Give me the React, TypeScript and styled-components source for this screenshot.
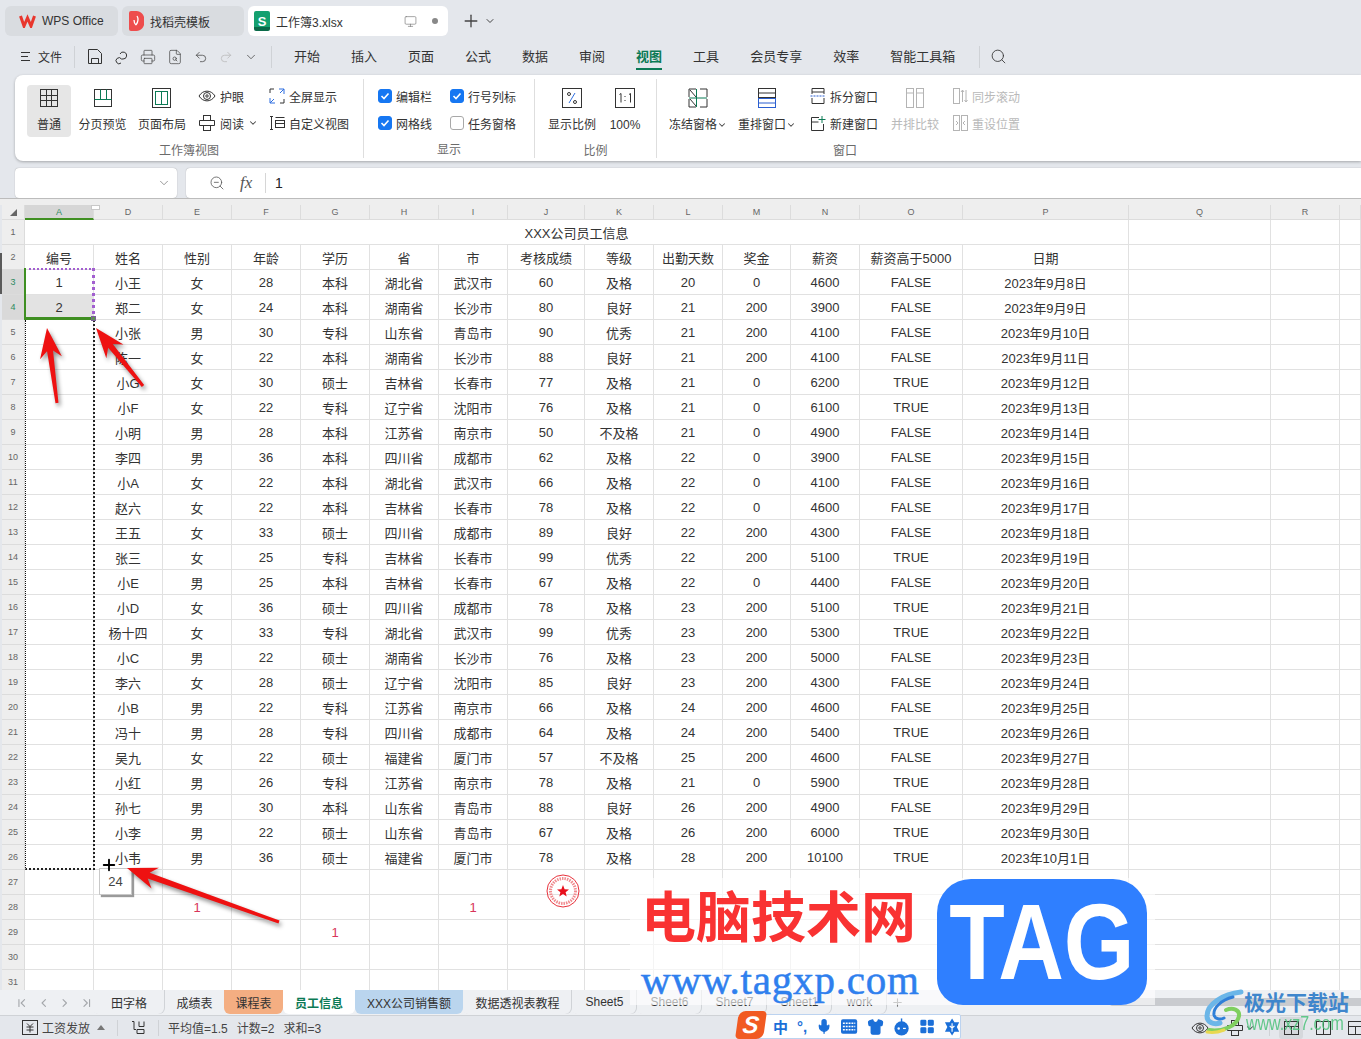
import React from 'react'
import styled, { createGlobalStyle } from 'styled-components'
import {
  ChevronDown,
  ChevronFirst,
  ChevronLast,
  ChevronLeft,
  ChevronRight,
  FileSearch,
  LayoutGrid,
  Mic,
  Monitor,
  Plus,
  Printer,
  Redo2,
  Search,
  Shirt,
  Undo2,
  ZoomOut,
} from 'lucide-react'

const FONT = '"Liberation Sans", "Noto Sans CJK SC", sans-serif'
const GREEN = '#0b7a55'
const LINE = '#e1e1e1'
const IME_BLUE = '#1b6fd8'

const GlobalStyle = createGlobalStyle`
  html, body {
    margin: 0;
    padding: 0;
    background: #e4e7ec;
    font-family: ${FONT};
  }
  * {
    box-sizing: border-box;
  }
`

const Page = styled.div`
  position: relative;
  width: 1361px;
  height: 1039px;
  overflow: hidden;
  display: flex;
  flex-direction: column;
  background: #e4e7ec;
  color: #333;
`

/* window tabs */
const WindowBar = styled.div`
  height: 38px;
  flex: none;
  display: flex;
  align-items: flex-start;
  padding: 6px 0 0 5px;
  gap: 4px;
`

const WindowTab = styled.div<{ $w: number; $active?: boolean; $pad: number }>`
  width: ${({ $w }) => $w}px;
  height: 30px;
  flex: none;
  display: flex;
  align-items: center;
  gap: 6px;
  padding: 0 10px 0 ${({ $pad }) => $pad}px;
  border-radius: 6px;
  font-size: 12px;
  color: #333;
  white-space: nowrap;
  background: ${({ $active }) => ($active ? '#fff' : '#d9dce0')};
`

const TabFile = styled.span`
  flex: 1;
`

const SheetBadge = styled.span`
  width: 16px;
  height: 20px;
  border-radius: 2px;
  background: linear-gradient(#14a06f 80%, #0a6a49 80%);
  color: #fff;
  font-size: 13px;
  font-weight: 700;
  display: flex;
  align-items: center;
  justify-content: center;
`

const UnsavedDot = styled.span`
  width: 6px;
  height: 6px;
  margin-left: 9px;
  border-radius: 50%;
  background: #888;
`

const NewTab = styled.div`
  display: flex;
  align-items: center;
  gap: 3px;
  height: 30px;
  margin-left: 9px;
  color: #444;
`

/* menu row */
const MenuBar = styled.div`
  height: 37px;
  flex: none;
  display: flex;
  align-items: center;
  padding-left: 21px;
  font-size: 13px;
`

const MenuFile = styled.div`
  display: flex;
  align-items: center;
  gap: 8px;
  width: 53px;
  font-size: 12px;
`

const MenuDivider = styled.span<{ $left: number; $right: number }>`
  width: 1px;
  height: 22px;
  background: #cfd2d6;
  margin: 0 ${({ $right }) => $right}px 0 ${({ $left }) => $left}px;
`

const QuickIcons = styled.div`
  display: flex;
  align-items: center;
  gap: 11px;
  width: 184px;
  color: #444;
`

const MenuItems = styled.div`
  display: flex;
  align-items: center;
  gap: 31px;
`

const MenuItem = styled.div<{ $active?: boolean }>`
  line-height: 18px;
  color: ${({ $active }) => ($active ? GREEN : '#333')};
  font-weight: ${({ $active }) => ($active ? 700 : 400)};
  border-bottom: 2px solid ${({ $active }) => ($active ? GREEN : 'transparent')};
  padding-bottom: 2px;
  margin-top: 4px;
`

/* ribbon */
const Ribbon = styled.div`
  height: 86px;
  flex: none;
  display: flex;
  margin-left: 15px;
  background: #fff;
  border-radius: 8px 0 0 8px;
  box-shadow: 0 1px 3px rgba(0, 0, 0, 0.28);
`

const Group = styled.div<{ $w: number; $last?: boolean }>`
  width: ${({ $w }) => $w}px;
  height: 79px;
  margin-top: 4px;
  padding-top: 6px;
  display: flex;
  flex-direction: column;
  border-right: ${({ $last }) => ($last ? 'none' : '1px solid #dedede')};
`

const GroupBody = styled.div<{ $cols: string; $pad: number }>`
  height: 52px;
  display: grid;
  grid-template-columns: ${({ $cols }) => $cols};
  padding-left: ${({ $pad }) => $pad}px;
`

const GroupLabel = styled.div`
  margin-top: 6px;
  line-height: 16px;
  text-align: center;
  font-size: 12px;
  color: #6b6b6b;
`

const LargeButton = styled.div<{ $w: number; $on?: boolean; $off?: boolean }>`
  width: ${({ $w }) => $w}px;
  height: 52px;
  display: flex;
  flex-direction: column;
  align-items: center;
  padding-top: 3px;
  border-radius: 4px;
  background: ${({ $on }) => ($on ? '#e6e6e6' : 'transparent')};
  color: ${({ $off }) => ($off ? '#b9b9b9' : '#333')};
  font-size: 12px;
  white-space: nowrap;
`

const LargeLabel = styled.span`
  margin-top: 9px;
  line-height: 16px;
  display: flex;
  align-items: center;
`

const SmallStack = styled.div`
  display: flex;
  flex-direction: column;
  gap: 3px;
  margin-top: -1px;
`

const SmallItem = styled.div<{ $off?: boolean }>`
  height: 24px;
  display: flex;
  align-items: center;
  gap: 4px;
  font-size: 12px;
  white-space: nowrap;
  color: ${({ $off }) => ($off ? '#b9b9b9' : '#333')};
`

const Check = styled.span<{ $on?: boolean }>`
  width: 14px;
  height: 14px;
  border-radius: 3px;
  display: flex;
  align-items: center;
  justify-content: center;
  background: ${({ $on }) => ($on ? '#1677f2' : '#fff')};
  border: 1px solid ${({ $on }) => ($on ? '#1677f2' : '#a8a8a8')};
`

/* formula row */
const FormulaRow = styled.div`
  height: 30px;
  flex: none;
  margin-top: 7px;
  display: flex;
  gap: 9px;
  padding-left: 15px;
`

const NameBox = styled.div`
  width: 162px;
  display: flex;
  align-items: center;
  justify-content: flex-end;
  padding-right: 6px;
  background: #fff;
  border-radius: 4px;
  box-shadow: 0 0 1px rgba(0, 0, 0, 0.4);
  color: #777;
`

const FormulaBox = styled.div`
  flex: 1;
  display: flex;
  align-items: center;
  padding-left: 23px;
  background: #fff;
  border-radius: 4px 0 0 4px;
  box-shadow: 0 0 1px rgba(0, 0, 0, 0.4);
  color: #555;
`

const FxMark = styled.span`
  margin-left: 15px;
  width: 25px;
  font-family: 'Liberation Serif', serif;
  font-style: italic;
  font-size: 17px;
`

const FormulaValue = styled.span`
  padding-left: 9px;
  border-left: 1px solid #d6d6d6;
  font-size: 14px;
  line-height: 20px;
  color: #222;
`

/* sheet */
const SheetTopBar = styled.div`
  height: 7px;
  flex: none;
  background: #eeeeee;
  border-top: 1px solid #bcbcbc;
`

const SheetArea = styled.div`
  flex: 1;
  min-height: 0;
  overflow: hidden;
  background: #e4e7ec;
`

const SheetGrid = styled.div`
  display: grid;
  grid-template-columns: 25px repeat(7, 69px) 77px 69px 69px 68px 69px 103px 166px 142px 69px 21px;
  grid-template-rows: 15px;
  grid-auto-rows: 25px;
  font-size: 13px;
  color: #333;
`

const ColHead = styled.div<{ $on?: boolean }>`
  display: flex;
  align-items: center;
  justify-content: center;
  font-size: 9px;
  color: ${({ $on }) => ($on ? '#2d8a5f' : '#666')};
  background: ${({ $on }) => ($on ? '#d6d6d6' : '#eeeeee')};
  border-right: 1px solid #dcdcdc;
  border-bottom: ${({ $on }) => ($on ? '2px solid #3f8f22' : '1px solid #dcdcdc')};
`

const RowHead = styled.div<{ $on?: boolean }>`
  display: flex;
  align-items: center;
  justify-content: center;
  margin-left: 2px;
  font-size: 9px;
  color: ${({ $on }) => ($on ? '#2d8a5f' : '#666')};
  background: ${({ $on }) => ($on ? '#d9d9d9' : '#eeeeee')};
  border-right: 1px solid #dcdcdc;
  border-bottom: 1px solid #dcdcdc;
`

const Cell = styled.div<{ $grey?: boolean; $accent?: boolean }>`
  display: flex;
  align-items: center;
  justify-content: center;
  padding-top: 1px;
  white-space: nowrap;
  background: ${({ $grey }) => ($grey ? '#e3e3e3' : '#fff')};
  border-right: 1px solid ${LINE};
  border-bottom: 1px solid ${LINE};
  color: ${({ $accent }) => ($accent ? '#d8345a' : '#333')};
`

const TitleCell = styled(Cell)`
  grid-column: span 14;
`

/* sheet tabs and status bar */
const SheetTabs = styled.div`
  height: 26px;
  flex: none;
  display: flex;
  background: #eef0f3;
  border-bottom: 1px solid #cfd2d6;
  font-size: 12px;
`

const TabNav = styled.div`
  width: 93px;
  display: flex;
  align-items: center;
  gap: 8px;
  padding-left: 15px;
  color: #a4a7ab;
`

const SheetTab = styled.div<{ $w: number; $bg?: string; $active?: boolean; $line?: boolean }>`
  width: ${({ $w }) => $w}px;
  height: 24px;
  display: flex;
  align-items: center;
  justify-content: center;
  white-space: nowrap;
  border-radius: 0 0 6px 6px;
  background: ${({ $bg }) => $bg || 'transparent'};
  color: ${({ $active }) => ($active ? GREEN : '#333')};
  font-weight: ${({ $active }) => ($active ? 700 : 400)};
  box-shadow: ${({ $line }) => ($line ? 'inset -1px 0 0 #d0d3d7' : 'none')};
`

const TabScroll = styled.div`
  width: 251px;
  height: 8px;
  margin: 8px 0 0 auto;
  background: #c9cbcf;
  border-radius: 2px 0 0 2px;
`

const StatusBar = styled.div`
  height: 23px;
  flex: none;
  display: flex;
  align-items: center;
  padding-left: 22px;
  font-size: 12px;
  color: #444;
`

const StatusGroup = styled.div`
  display: flex;
  align-items: center;
  gap: 4px;
`

const StatusCaret = styled.svg`
  margin-left: 3px;
`

const StatusDivider = styled.span<{ $left: number; $right: number }>`
  width: 1px;
  height: 16px;
  background: #cfd2d6;
  margin: 0 ${({ $right }) => $right}px 0 ${({ $left }) => $left}px;
`

const StatusStats = styled.div`
  display: flex;
  gap: 9px;
`

const ViewButtons = styled.div`
  display: flex;
  align-items: center;
  gap: 8px;
  margin: 0 -6px 0 auto;
`

const ViewTools = styled.div`
  display: flex;
  align-items: center;
  gap: 17px;
`

const ReadMenu = styled.div`
  display: flex;
  align-items: center;
  gap: 1px;
`

const ViewButton = styled.span<{ $on?: boolean }>`
  width: 24px;
  height: 22px;
  display: flex;
  align-items: center;
  justify-content: center;
  border-radius: 3px;
  background: ${({ $on }) => ($on ? '#d5d8dc' : 'transparent')};
`

/* things lying over the sheet */
const WindowEdge = styled.div`
  position: absolute;
  left: 0;
  top: 253px;
  width: 2px;
  height: 41px;
  background: #5a5a5a;
`

const ColResizeMark = styled.div`
  position: absolute;
  left: 91px;
  top: 205px;
  width: 9px;
  height: 5px;
  background: #fff;
  border: 1px solid #c8c8c8;
`

const CopySource = styled.div`
  position: absolute;
  left: 24px;
  top: 268px;
  width: 71px;
  height: 52px;
  border: 2px dotted #a25fd0;
  border-right-width: 3px;
`

const SelectEdge = styled.div`
  position: absolute;
  left: 24px;
  top: 268px;
  width: 70px;
  height: 52px;
  border-left: 2px solid #3f8f22;
  border-bottom: 3px solid #3f8f22;
`

const FillHandle = styled.div`
  position: absolute;
  left: 91px;
  top: 316px;
  width: 5px;
  height: 5px;
  background: #5f8f52;
  border: 1px solid #7b5f9a;
`

const FillRange = styled.div`
  position: absolute;
  left: 25px;
  top: 320px;
  width: 70px;
  height: 550px;
  border-left: 1px dotted #111;
  border-right: 2px dotted #222;
  border-bottom: 2px dotted #222;
`

const FillTip = styled.div`
  position: absolute;
  left: 99px;
  top: 868px;
  width: 33px;
  height: 27px;
  display: flex;
  align-items: center;
  justify-content: center;
  background: #fff;
  border: 1px solid #c8c8c8;
  box-shadow: 2px 2px 1px #9a9a9a;
  font-size: 13px;
  color: #444;
`

const FillCursor = styled(Plus)`
  position: absolute;
  left: 100px;
  top: 856px;
  color: #000;
`

const DrawLayer = styled.svg`
  position: absolute;
  left: 0;
  top: 0;
  pointer-events: none;
`

const ArrowShape = styled.polygon`
  fill: #ee1111;
  filter: drop-shadow(2px 3px 2px rgba(0, 0, 0, 0.45));
`

const Stamp = styled.svg`
  position: absolute;
  left: 545px;
  top: 873px;
`

const WatermarkWash = styled.div`
  position: absolute;
  left: 630px;
  top: 878px;
  width: 525px;
  height: 127px;
  background: rgba(255, 255, 255, 0.62);
`

const WatermarkTitle = styled.div`
  position: absolute;
  left: 641px;
  top: 874px;
  font-family: 'Noto Sans CJK SC', sans-serif;
  font-weight: 700;
  font-size: 55px;
  line-height: 78px;
  color: #f93232;
  white-space: nowrap;
`

const WatermarkUrl = styled.div`
  position: absolute;
  left: 641px;
  top: 956px;
  font-family: 'Liberation Serif', serif;
  font-size: 41px;
  line-height: 48px;
  letter-spacing: 0.8px;
  color: #2f7fee;
  -webkit-text-stroke: 0.5px #2f7fee;
  white-space: nowrap;
`

const TagBadge = styled.div`
  position: absolute;
  left: 937px;
  top: 879px;
  width: 210px;
  height: 126px;
  display: flex;
  align-items: center;
  justify-content: center;
  border-radius: 34px 34px 26px 26px;
  background: #2f7fff;
`

const TagText = styled.span`
  font-family: 'Liberation Sans', sans-serif;
  font-weight: 700;
  font-size: 107px;
  line-height: 107px;
  color: #fff;
  transform: scaleX(0.85);
`

const SiteName = styled.div`
  position: absolute;
  left: 1244px;
  top: 986px;
  font-family: 'Noto Sans CJK SC', sans-serif;
  font-weight: 700;
  font-size: 21px;
  line-height: 30px;
  color: #3f86cc;
  white-space: nowrap;
`

const SiteUrl = styled.div`
  position: absolute;
  left: 1246px;
  top: 1011px;
  font-family: 'Liberation Sans', sans-serif;
  font-size: 20px;
  line-height: 24px;
  color: #4cc27a;
  opacity: 0.85;
  white-space: nowrap;
  transform: scaleX(0.8);
  transform-origin: left center;
`

const SiteSwirl = styled.svg`
  position: absolute;
  left: 1203px;
  top: 988px;
`

const ImeBar = styled.div`
  position: absolute;
  left: 754px;
  top: 1014px;
  width: 207px;
  height: 25px;
  display: flex;
  align-items: center;
  gap: 9px;
  padding-left: 18px;
  background: #fff;
  border: 1px solid #bcd3f0;
  border-radius: 2px;
  color: ${IME_BLUE};
  font-size: 15px;
  font-weight: 700;
`

const ImeLogo = styled.div`
  position: absolute;
  left: 737px;
  top: 1011px;
  width: 28px;
  height: 28px;
  display: flex;
  align-items: center;
  justify-content: center;
  background: #f15a22;
  border-radius: 7px 4px 7px 4px;
  transform: skewX(-8deg);
  color: #fff;
  font-size: 24px;
  font-weight: 700;
  font-style: italic;
`

const Stroke = ({ w = 18, h = 18, children }: { w?: number; h?: number; children: React.ReactNode }) => (
  <svg width={w} height={h} viewBox={`0 0 ${w} ${h}`} fill="none" stroke="#333" strokeWidth="1">
    {children}
  </svg>
)

const IconNormal = () => (
  <Stroke w={20} h={20}>
    <rect x="1.5" y="1.5" width="17" height="17" />
    <path d="M7.5 1.5v17M12.5 1.5v17M1.5 7.5h17M1.5 12.5h17" />
  </Stroke>
)

const IconPagePreview = () => (
  <Stroke w={20} h={20}>
    <rect x="1.5" y="1.5" width="17" height="17" />
    <path d="M1.5 11.5h17M7.5 1.5v10M13.5 1.5v10" stroke={GREEN} />
  </Stroke>
)

const IconPageLayout = () => (
  <Stroke w={20} h={20}>
    <rect x="0.5" y="0.5" width="18" height="19" />
    <rect x="3.5" y="3.5" width="12" height="13" stroke={GREEN} />
    <path d="M9.5 3.5v13" stroke={GREEN} />
  </Stroke>
)

const IconEye = () => (
  <Stroke w={18} h={14}>
    <path d="M1 7c4-6.5 12-6.5 16 0-4 6.5-12 6.5-16 0z" />
    <circle cx="9" cy="7" r="3.5" />
    <circle cx="9" cy="7" r="1.2" />
  </Stroke>
)

const IconFullscreen = () => (
  <Stroke w={16} h={16}>
    <path d="M1 5V1h4M11 15h4v-4" />
    <path d="M10 1h5v5M15 1l-4 4M1 10v5h5M1 15l4-4" stroke="#2f6fe0" />
  </Stroke>
)

const IconRead = () => (
  <Stroke w={18} h={18}>
    <rect x="5.5" y="1.5" width="7" height="5" />
    <rect x="5.5" y="11.5" width="7" height="5" />
    <path d="M5.5 6.5h-4v5h4M12.5 6.5h4v5h-4" />
  </Stroke>
)

const IconCustomView = () => (
  <Stroke w={16} h={16}>
    <path d="M1 1.5h3M1 14.5h3M2.5 1.5v13" />
    <rect x="6.5" y="5.5" width="9" height="7" />
    <path d="M6.5 2.5h9M6.5 8.5h9" />
  </Stroke>
)

const IconPercent = () => (
  <Stroke w={20} h={20}>
    <rect x="0.5" y="0.5" width="19" height="19" />
    <path d="M13 5l-6 10" stroke="#2f6fe0" />
    <circle cx="7" cy="6" r="1.5" />
    <circle cx="13" cy="14" r="1.5" />
  </Stroke>
)

const IconActual = () => (
  <Stroke w={20} h={20}>
    <rect x="0.5" y="0.5" width="19" height="19" />
    <path d="M4.5 6.5l1.5-1v9M14 6.5l1.5-1v9" />
    <path d="M10 8v1M10 12v1" />
  </Stroke>
)

const IconFreeze = () => (
  <Stroke w={20} h={20}>
    <path d="M1 9V1h7M12 1h7v8M19 11v8h-7M8 19H1v-8" />
    <path d="M1 10h18M8.5 1v18" stroke={GREEN} />
    <path d="M2 2l6 7M2 11l6 7" />
  </Stroke>
)

const IconArrange = () => (
  <Stroke w={20} h={20}>
    <rect x="1.5" y="0.5" width="17" height="9" />
    <path d="M1.5 5h17" />
    <rect x="1.5" y="10.5" width="17" height="9" stroke="#2b5fd0" />
    <path d="M1.5 15h17" stroke="#2b5fd0" />
  </Stroke>
)

const IconSplit = () => (
  <Stroke w={16} h={18}>
    <path d="M2 7V1.5h12V7M2 11v5.5h12V11M2 5h12" />
    <path d="M0.5 9h15" stroke="#2b5fd0" strokeDasharray="2 1" />
  </Stroke>
)

const IconNewWindow = () => (
  <Stroke w={16} h={17}>
    <path d="M9 2.5H1.5v13h12V9M1.5 7h7" />
    <path d="M12 1v7M8.5 4.5h7" stroke={GREEN} />
  </Stroke>
)

const IconSideBySide = () => (
  <svg width="20" height="20" viewBox="0 0 20 20" fill="none" stroke="#b4b4b4">
    <rect x="1.5" y="0.5" width="7" height="19" />
    <rect x="11.5" y="0.5" width="7" height="19" />
    <path d="M1.5 5h7M11.5 5h7" />
  </svg>
)

const IconSyncScroll = () => (
  <svg width="15" height="18" viewBox="0 0 15 18" fill="none" stroke="#b4b4b4">
    <rect x="0.5" y="1.5" width="6" height="15" />
    <path d="M9.5 3v12M13 3v12M8 5l1.5-2L11 5M11.5 13l1.5 2 1.5-2" />
  </svg>
)

const IconResetPos = () => (
  <svg width="15" height="16" viewBox="0 0 15 16" fill="none" stroke="#b4b4b4">
    <rect x="0.5" y="0.5" width="6" height="15" />
    <rect x="8.5" y="0.5" width="6" height="15" />
    <path d="M3 6l2 2-2 2M12 6l-2 2 2 2" />
  </svg>
)

const IconSave = () => (
  <Stroke w={16} h={17}>
    <path d="M1.5 1.5h9l4 4v10h-13z" />
    <path d="M4.5 15.5v-5h7v5" />
  </Stroke>
)

const IconLink = () => (
  <Stroke w={15} h={16}>
    <path d="M6 5a3.5 3.5 0 1 1 3 5H7.5a3 3 0 1 0-.5 4" />
  </Stroke>
)

const IconPayroll = () => (
  <Stroke w={16} h={15}>
    <rect x="0.5" y="0.5" width="15" height="14" />
    <path d="M5 3.5l3 3 3-3M4.5 7h7M4.5 10h7M8 6.5v6" />
  </Stroke>
)

const IconPin = () => (
  <Stroke w={15} h={15}>
    <path d="M1 1.5h2v8h2M8 1.5v5h5v-5M6 13.5h7v-4H6z" />
  </Stroke>
)

const IconPageSplit = ({ cols }: { cols?: boolean }) => (
  <Stroke w={15} h={14}>
    <rect x="0.5" y="0.5" width="14" height="13" />
    {cols ? <path d="M7.5 0.5v13" /> : <path d="M0.5 5.5h14M7.5 5.5v8" />}
  </Stroke>
)

const ImeKeyboard = () => (
  <svg width="17" height="15" viewBox="0 0 17 15">
    <rect width="17" height="15" rx="2" fill={IME_BLUE} />
    <path d="M2 4h13M2 7.5h13M2 11h13" stroke="#fff" strokeWidth="1.5" strokeDasharray="2 1" />
  </svg>
)

const ImeRobot = () => (
  <svg width="18" height="18" viewBox="0 0 18 18">
    <path d="M9 0v4" stroke={IME_BLUE} strokeWidth="1.5" />
    <circle cx="9" cy="10.5" r="7.5" fill={IME_BLUE} />
    <circle cx="6" cy="10.5" r="1.3" fill="#fff" />
    <path d="M10.5 10.5h3" stroke="#fff" strokeWidth="1.3" />
  </svg>
)

const ImeHex = () => (
  <svg width="17" height="18" viewBox="0 0 17 18">
    <path d="M8.5 0l2.5 4h5l-2.5 5 2.5 5h-5l-2.5 4-2.500-4H1l2.500-5L1 4h5z" fill={IME_BLUE} />
    <path d="M8.5 5v9M6 8l2.500 2L11 8" stroke="#fff" strokeWidth="1.2" fill="none" />
  </svg>
)

const CheckBox = ({ on }: { on?: boolean }) => (
  <Check $on={on}>
    {on && (
      <svg width="10" height="10" viewBox="0 0 10 10" fill="none" stroke="#fff" strokeWidth="1.6">
        <path d="M1.5 5l2.5 2.5 4.5-5" />
      </svg>
    )}
  </Check>
)

const Caret = () => <ChevronDown size={10} strokeWidth={2.5} color="#444" />

const COLUMN_LETTERS = ['A', 'D', 'E', 'F', 'G', 'H', 'I', 'J', 'K', 'L', 'M', 'N', 'O', 'P', 'Q', 'R', '']
const HEADERS = ['编号', '姓名', '性别', '年龄', '学历', '省', '市', '考核成绩', '等级', '出勤天数', '奖金', '薪资', '薪资高于5000', '日期']

const STAFF = [
  '小王 女 28 本科 湖北省 武汉市 60 及格 20 0 4600 FALSE 2023年9月8日',
  '郑二 女 24 本科 湖南省 长沙市 80 良好 21 200 3900 FALSE 2023年9月9日',
  '小张 男 30 专科 山东省 青岛市 90 优秀 21 200 4100 FALSE 2023年9月10日',
  '陈一 女 22 本科 湖南省 长沙市 88 良好 21 200 4100 FALSE 2023年9月11日',
  '小G 女 30 硕士 吉林省 长春市 77 及格 21 0 6200 TRUE 2023年9月12日',
  '小F 女 22 专科 辽宁省 沈阳市 76 及格 21 0 6100 TRUE 2023年9月13日',
  '小明 男 28 本科 江苏省 南京市 50 不及格 21 0 4900 FALSE 2023年9月14日',
  '李四 男 36 本科 四川省 成都市 62 及格 22 0 3900 FALSE 2023年9月15日',
  '小A 女 22 本科 湖北省 武汉市 66 及格 22 0 4100 FALSE 2023年9月16日',
  '赵六 女 22 本科 吉林省 长春市 78 及格 22 0 4600 FALSE 2023年9月17日',
  '王五 女 33 硕士 四川省 成都市 89 良好 22 200 4300 FALSE 2023年9月18日',
  '张三 女 25 专科 吉林省 长春市 99 优秀 22 200 5100 TRUE 2023年9月19日',
  '小E 男 25 本科 吉林省 长春市 67 及格 22 0 4400 FALSE 2023年9月20日',
  '小D 女 36 硕士 四川省 成都市 78 及格 23 200 5100 TRUE 2023年9月21日',
  '杨十四 女 33 专科 湖北省 武汉市 99 优秀 23 200 5300 TRUE 2023年9月22日',
  '小C 男 22 硕士 湖南省 长沙市 76 及格 23 200 5000 FALSE 2023年9月23日',
  '李六 女 28 硕士 辽宁省 沈阳市 85 良好 23 200 4300 FALSE 2023年9月24日',
  '小B 男 22 专科 江苏省 南京市 66 及格 24 200 4600 FALSE 2023年9月25日',
  '冯十 男 28 专科 四川省 成都市 64 及格 24 200 5400 TRUE 2023年9月26日',
  '吴九 女 22 硕士 福建省 厦门市 57 不及格 25 200 4600 FALSE 2023年9月27日',
  '小红 男 26 专科 江苏省 南京市 78 及格 21 0 5900 TRUE 2023年9月28日',
  '孙七 男 30 本科 山东省 青岛市 88 良好 26 200 4900 FALSE 2023年9月29日',
  '小李 男 22 硕士 山东省 青岛市 67 及格 26 200 6000 TRUE 2023年9月30日',
  '小韦 男 36 硕士 福建省 厦门市 78 及格 28 200 10100 TRUE 2023年10月1日',
]

// row number -> column index -> stray value below the table
const STRAY: Record<number, Record<number, string>> = {
  28: { 2: '1', 6: '1' },
  29: { 4: '1' },
}

const MENU = ['开始', '插入', '页面', '公式', '数据', '审阅', '视图', '工具', '会员专享', '效率', '智能工具箱']

const padRow = (values: string[]) => [...values, ...Array(COLUMN_LETTERS.length - values.length).fill('')]

const rowValues = (rowNumber: number): string[] => {
  if (rowNumber === 2) return padRow(HEADERS)
  if (rowNumber >= 3 && rowNumber <= 26) {
    const id = rowNumber === 3 ? '1' : rowNumber === 4 ? '2' : ''
    return padRow([id, ...STAFF[rowNumber - 3].split(' ')])
  }
  const stray = STRAY[rowNumber] || {}
  return COLUMN_LETTERS.map((_, i) => stray[i] || '')
}

const Arrow = ({ x1, y1, x2, y2 }: { x1: number; y1: number; x2: number; y2: number }) => {
  const len = Math.hypot(x2 - x1, y2 - y1)
  const ux = (x2 - x1) / len
  const uy = (y2 - y1) / len
  const at = (back: number, side: number) => `${x2 - ux * back - uy * side},${y2 - uy * back + ux * side}`
  const points = [
    at(0, 0),
    at(30, 11),
    at(23, 3),
    at(len, 1.5),
    at(len, -1.5),
    at(23, -3),
    at(30, -11),
  ].join(' ')
  return <ArrowShape points={points} />
}

export default function App() {
  const rowNumbers = Array.from({ length: 30 }, (_, i) => i + 2)

  return (
    <Page>
      <GlobalStyle />

      <WindowBar>
        <WindowTab $w={113} $pad={14}>
          <svg width="17" height="14" viewBox="0 0 17 14" fill="none" stroke="#e8362d" strokeWidth="3">
            <path d="M1.5 2l3.5 10 3.5-8 3.5 8 3.5-10" />
          </svg>
          WPS Office
        </WindowTab>
        <WindowTab $w={122} $pad={7}>
          <svg width="15" height="20" viewBox="0 0 15 20">
            <path d="M0 2a2 2 0 0 1 2-2h5a8 8 0 0 1 8 10 8 8 0 0 1-8 10H2a2 2 0 0 1-2-2z" fill="#ee4d4d" />
            <path d="M8 5c2 3 1 6-1 9M5 9c0 3 1 4 2 5" stroke="#fff" strokeWidth="1.3" fill="none" />
          </svg>
          找稻壳模板
        </WindowTab>
        <WindowTab $w={200} $pad={6} $active>
          <SheetBadge>S</SheetBadge>
          <TabFile>工作簿3.xlsx</TabFile>
          <Monitor size={13} strokeWidth={1.2} color="#777" />
          <UnsavedDot />
        </WindowTab>
        <NewTab>
          <Plus size={20} strokeWidth={1.6} />
          <ChevronDown size={12} />
        </NewTab>
      </WindowBar>

      <MenuBar>
        <MenuFile>
          <svg width="9" height="11" viewBox="0 0 9 11" fill="none" stroke="#333">
            <path d="M0 1.5h9M0 5.5h7M0 9.5h9" />
          </svg>
          文件
        </MenuFile>
        <MenuDivider $left={0} $right={12} />
        <QuickIcons>
          <IconSave />
          <IconLink />
          <Printer size={16} strokeWidth={1.1} />
          <FileSearch size={16} strokeWidth={1.1} />
          <Undo2 size={14} strokeWidth={1.3} />
          <Redo2 size={14} strokeWidth={1.3} color="#b8b8b8" />
          <ChevronDown size={14} strokeWidth={1.3} />
        </QuickIcons>
        <MenuDivider $left={0} $right={22} />
        <MenuItems>
          {MENU.map((item) => (
            <MenuItem key={item} $active={item === '视图'}>
              {item}
            </MenuItem>
          ))}
        </MenuItems>
        <MenuDivider $left={24} $right={10} />
        <Search size={17} strokeWidth={1.2} />
      </MenuBar>

      <Ribbon>
        <Group $w={349}>
          <GroupBody $cols="46px 59px 66px 71px auto" $pad={12}>
            <LargeButton $w={44} $on>
              <IconNormal />
              <LargeLabel>普通</LargeLabel>
            </LargeButton>
            <LargeButton $w={59}>
              <IconPagePreview />
              <LargeLabel>分页预览</LargeLabel>
            </LargeButton>
            <LargeButton $w={60}>
              <IconPageLayout />
              <LargeLabel>页面布局</LargeLabel>
            </LargeButton>
            <SmallStack>
              <SmallItem>
                <IconEye />
                护眼
              </SmallItem>
              <SmallItem>
                <IconRead />
                阅读
                <Caret />
              </SmallItem>
            </SmallStack>
            <SmallStack>
              <SmallItem>
                <IconFullscreen />
                全屏显示
              </SmallItem>
              <SmallItem>
                <IconCustomView />
                自定义视图
              </SmallItem>
            </SmallStack>
          </GroupBody>
          <GroupLabel>工作簿视图</GroupLabel>
        </Group>

        <Group $w={171}>
          <GroupBody $cols="72px auto" $pad={14}>
            <SmallStack>
              <SmallItem>
                <CheckBox on />
                编辑栏
              </SmallItem>
              <SmallItem>
                <CheckBox on />
                网格线
              </SmallItem>
            </SmallStack>
            <SmallStack>
              <SmallItem>
                <CheckBox on />
                行号列标
              </SmallItem>
              <SmallItem>
                <CheckBox />
                任务窗格
              </SmallItem>
            </SmallStack>
          </GroupBody>
          <GroupLabel>显示</GroupLabel>
        </Group>

        <Group $w={122}>
          <GroupBody $cols="48px 58px" $pad={13}>
            <LargeButton $w={48}>
              <IconPercent />
              <LargeLabel>显示比例</LargeLabel>
            </LargeButton>
            <LargeButton $w={58}>
              <IconActual />
              <LargeLabel>100%</LargeLabel>
            </LargeButton>
          </GroupBody>
          <GroupLabel>比例</GroupLabel>
        </Group>

        <Group $w={376} $last>
          <GroupBody $cols="69px 73px 81px 62px auto" $pad={11}>
            <LargeButton $w={60}>
              <IconFreeze />
              <LargeLabel>
                冻结窗格
                <Caret />
              </LargeLabel>
            </LargeButton>
            <LargeButton $w={60}>
              <IconArrange />
              <LargeLabel>
                重排窗口
                <Caret />
              </LargeLabel>
            </LargeButton>
            <SmallStack>
              <SmallItem>
                <IconSplit />
                拆分窗口
              </SmallItem>
              <SmallItem>
                <IconNewWindow />
                新建窗口
              </SmallItem>
            </SmallStack>
            <LargeButton $w={48} $off>
              <IconSideBySide />
              <LargeLabel>并排比较</LargeLabel>
            </LargeButton>
            <SmallStack>
              <SmallItem $off>
                <IconSyncScroll />
                同步滚动
              </SmallItem>
              <SmallItem $off>
                <IconResetPos />
                重设位置
              </SmallItem>
            </SmallStack>
          </GroupBody>
          <GroupLabel>窗口</GroupLabel>
        </Group>
      </Ribbon>

      <FormulaRow>
        <NameBox>
          <ChevronDown size={14} strokeWidth={1.3} />
        </NameBox>
        <FormulaBox>
          <ZoomOut size={16} strokeWidth={1.2} />
          <FxMark>fx</FxMark>
          <FormulaValue>1</FormulaValue>
        </FormulaBox>
      </FormulaRow>

      <SheetTopBar />
      <SheetArea>
        <SheetGrid>
          <RowHead>
            <svg width="7" height="7" viewBox="0 0 7 7">
              <path d="M7 0v7H0z" fill="#666" />
            </svg>
          </RowHead>
          {COLUMN_LETTERS.map((letter) => (
            <ColHead key={letter || 'tail'} $on={letter === 'A'}>
              {letter}
            </ColHead>
          ))}

          <RowHead>1</RowHead>
          <TitleCell>XXX公司员工信息</TitleCell>
          <Cell />
          <Cell />
          <Cell />

          {rowNumbers.map((rowNumber) => (
            <React.Fragment key={rowNumber}>
              <RowHead $on={rowNumber === 3 || rowNumber === 4}>{rowNumber}</RowHead>
              {rowValues(rowNumber).map((value, col) => (
                <Cell key={col} $grey={rowNumber === 4 && col === 0} $accent={rowNumber >= 27}>
                  {value}
                </Cell>
              ))}
            </React.Fragment>
          ))}
        </SheetGrid>
      </SheetArea>

      <SheetTabs>
        <TabNav>
          <ChevronFirst size={14} />
          <ChevronLeft size={14} />
          <ChevronRight size={14} />
          <ChevronLast size={14} />
        </TabNav>
        <SheetTab $w={72} $line>田字格</SheetTab>
        <SheetTab $w={59}>成绩表</SheetTab>
        <SheetTab $w={59} $bg="#f4ae82">课程表</SheetTab>
        <SheetTab $w={72} $bg="#fff" $active>员工信息</SheetTab>
        <SheetTab $w={108} $bg="#bad5ee">XXX公司销售额</SheetTab>
        <SheetTab $w={109} $line>数据透视表教程</SheetTab>
        <SheetTab $w={65} $line>Sheet5</SheetTab>
        <SheetTab $w={65} $line>Sheet6</SheetTab>
        <SheetTab $w={65} $line>Sheet7</SheetTab>
        <SheetTab $w={65} $line>Sheet1</SheetTab>
        <SheetTab $w={55} $line>work</SheetTab>
        <SheetTab $w={20}>
          <Plus size={13} color="#777" />
        </SheetTab>
        <TabScroll />
      </SheetTabs>

      <StatusBar>
        <StatusGroup>
          <IconPayroll />
          工资发放
          <StatusCaret width="8" height="5" viewBox="0 0 8 5">
            <path d="M4 0l4 5H0z" fill="#777" />
          </StatusCaret>
        </StatusGroup>
        <StatusDivider $left={12} $right={13} />
        <IconPin />
        <StatusDivider $left={12} $right={9} />
        <StatusStats>
          <span>平均值=1.5</span>
          <span>计数=2</span>
          <span>求和=3</span>
        </StatusStats>
        <ViewButtons>
          <ViewTools>
            <IconEye />
            <ReadMenu>
              <IconRead />
              <Caret />
            </ReadMenu>
          </ViewTools>
          <StatusDivider $left={6} $right={1} />
          <ViewButton $on>
            <IconPageSplit />
          </ViewButton>
          <ViewButton>
            <IconPageSplit cols />
          </ViewButton>
          <ViewButton>
            <IconPageSplit />
          </ViewButton>
        </ViewButtons>
      </StatusBar>

      <WindowEdge />
      <ColResizeMark />
      <FillRange />
      <CopySource />
      <SelectEdge />
      <FillHandle />
      <FillTip>24</FillTip>
      <FillCursor size={18} strokeWidth={2.5} />

      <Stamp width="36" height="36" viewBox="0 0 36 36" fill="none">
        <circle cx="18" cy="18" r="16" stroke="#e8323c" strokeWidth="1" />
        <circle cx="18" cy="18" r="12.5" stroke="#f08a8e" strokeWidth="3" strokeDasharray="1.5 1" />
        <polygon points="18,12 19.6,16.2 24,16.4 20.6,19.2 21.7,23.5 18,21 14.3,23.5 15.4,19.2 12,16.4 16.4,16.2" fill="#e8101c" />
      </Stamp>

      <DrawLayer width="1361" height="1039">
        <Arrow x1={57} y1={403} x2={47} y2={328} />
        <Arrow x1={143} y1={386} x2={96} y2={328} />
        <Arrow x1={279} y1={922} x2={127} y2={868} />
      </DrawLayer>

      <WatermarkWash />
      <WatermarkTitle>电脑技术网</WatermarkTitle>
      <WatermarkUrl>www.tagxp.com</WatermarkUrl>
      <TagBadge>
        <TagText>TAG</TagText>
      </TagBadge>

      <ImeBar>
        <span>中</span>
        <span>°,</span>
        <Mic size={17} fill={IME_BLUE} />
        <ImeKeyboard />
        <Shirt size={18} fill={IME_BLUE} />
        <ImeRobot />
        <LayoutGrid size={17} fill={IME_BLUE} />
        <ImeHex />
      </ImeBar>
      <ImeLogo>S</ImeLogo>

      <SiteSwirl width="44" height="48" viewBox="0 0 44 48" fill="none" strokeLinecap="round">
        <path d="M38 4C20 6 4 16 4 28c0 6 6 9 13 7" stroke="#6bb6e8" strokeWidth="5" />
        <path d="M30 9C18 12 10 20 11 27c1 4 6 5 10 3" stroke="#2f7fd8" strokeWidth="3" />
        <path d="M6 42c14 2 28-4 30-14 1-6-6-9-13-6" stroke="#7fcf5f" strokeWidth="4" />
        <path d="M4 44c6 1 12 0 17-2" stroke="#e8d850" strokeWidth="3" />
      </SiteSwirl>
      <SiteName>极光下载站</SiteName>
      <SiteUrl>www.xz7.com</SiteUrl>
    </Page>
  )
}
